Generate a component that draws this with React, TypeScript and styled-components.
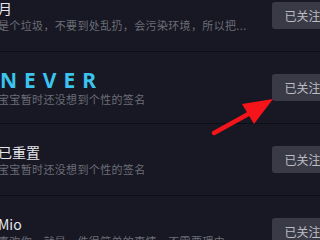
import * as React from 'react';
import styled, { createGlobalStyle } from 'styled-components';


interface Friend {
    name: string
    sign: string
    fancy?: boolean
}


const friends: Array<Friend> = [
    { name: '月', sign: '是个垃圾，不要到处乱扔，会污染环境，所以把...' },
    { name: 'NEVER', sign: '宝宝暂时还没想到个性的签名', fancy: true },
    { name: '已重置', sign: '宝宝暂时还没想到个性的签名' },
    { name: 'Mio', sign: '喜欢你，就是一件很简单的事情，不需要理由' },
];


const GlobalStyle = createGlobalStyle`
  html, body {
    margin: 0;
    padding: 0;
    background: #171823;
    overflow: hidden;
  }
  body {
    font-family: "Noto Sans CJK SC", "Noto Sans", sans-serif;
  }
`;

const Screen = styled.div`
  position: relative;
  width: 320px;
  height: 240px;
  overflow: hidden;
  background: #171823;
`;

const List = styled.div`
  display: flex;
  flex-direction: column;
  margin-top: -20px;
  margin-left: -2px;
  margin-right: -10px;
`;

const Row = styled.div`
  display: flex;
  align-items: center;
  height: 71px;
  border-bottom: 1px solid #0d0e15;
`;

const Info = styled.div`
  flex: 1;
  min-width: 0;
  display: flex;
  flex-direction: column;
`;

const Name = styled.div<{ $fancy?: boolean }>`
  color: ${p => p.$fancy ? '#3cc3ee' : '#e6e6ea'};
  font-family: ${p => p.$fancy ? '"Noto Sans", "DejaVu Sans", sans-serif' : '"Noto Sans CJK SC", "Noto Sans", sans-serif'};
  font-size: ${p => p.$fancy ? '21px' : '14px'};
  font-weight: ${p => p.$fancy ? 700 : 400};
  letter-spacing: ${p => p.$fancy ? '7px' : '0'};
  line-height: ${p => p.$fancy ? '22px' : '18px'};
  padding-left: ${p => p.$fancy ? '2px' : '0'};
`;

const Sign = styled.div`
  margin-top: 1px;
  color: #6c6d77;
  font-size: 11px;
  letter-spacing: 0.35px;
  line-height: 14px;
  white-space: nowrap;
  overflow: hidden;
`;

const FollowButton = styled.button`
  flex: none;
  width: 58px;
  height: 27px;
  margin-left: 12px;
  border: none;
  border-radius: 3px;
  background: #393a46;
  color: #bcbdc5;
  font-family: "Noto Sans CJK SC", sans-serif;
  font-size: 12px;
  padding: 0 0 0 3px;
`;

const Arrow = styled.svg`
  position: absolute;
  left: 0;
  top: 0;
  pointer-events: none;
`;


export default function App() {
    return (
        <Screen>
            <GlobalStyle />
            <List>
                {friends.map(friend => (
                    <Row key={friend.name}>
                        <Info>
                            <Name $fancy={friend.fancy}>{friend.name}</Name>
                            <Sign>{friend.sign}</Sign>
                        </Info>
                        <FollowButton>已关注</FollowButton>
                    </Row>
                ))}
            </List>
            <Arrow width="320" height="240" viewBox="0 0 320 240">
                <line x1="214" y1="133" x2="252" y2="112" stroke="#f5141a" strokeWidth="4.5" strokeLinecap="round" />
                <polygon points="273,99 242,104 254,124" fill="#f5141a" />
            </Arrow>
        </Screen>
    );
}
